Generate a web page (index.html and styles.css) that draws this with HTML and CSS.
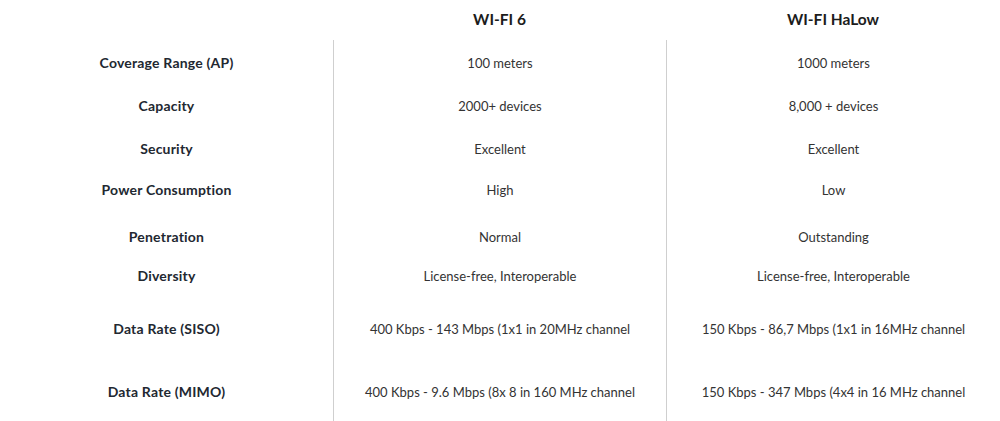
FILE: index.html
```html
<!DOCTYPE html>
<html lang="en">
<head>
<meta charset="utf-8">
<title>WI-FI 6 vs WI-FI HaLow</title>
<link rel="stylesheet" href="styles.css">
</head>
<body>
<div class="table">
  <div class="cell head"></div>
  <div class="cell head">WI-FI 6</div>
  <div class="cell head">WI-FI HaLow</div>

  <div class="cell label">Coverage Range (AP)</div>
  <div class="cell val div">100 meters</div>
  <div class="cell val div">1000 meters</div>

  <div class="cell label">Capacity</div>
  <div class="cell val div">2000+ devices</div>
  <div class="cell val div">8,000 + devices</div>

  <div class="cell label">Security</div>
  <div class="cell val div">Excellent</div>
  <div class="cell val div">Excellent</div>

  <div class="cell label">Power Consumption</div>
  <div class="cell val div">High</div>
  <div class="cell val div">Low</div>

  <div class="cell label">Penetration</div>
  <div class="cell val div">Normal</div>
  <div class="cell val div">Outstanding</div>

  <div class="cell label">Diversity</div>
  <div class="cell val div">License-free, Interoperable</div>
  <div class="cell val div">License-free, Interoperable</div>

  <div class="cell label">Data Rate (SISO)</div>
  <div class="cell val div">400 Kbps - 143 Mbps (1x1 in 20MHz channel</div>
  <div class="cell val div">150 Kbps - 86,7 Mbps (1x1 in 16MHz channel</div>

  <div class="cell label last">Data Rate (MIMO)</div>
  <div class="cell val div last">400 Kbps - 9.6 Mbps (8x 8 in 160 MHz channel</div>
  <div class="cell val div last">150 Kbps - 347 Mbps (4x4 in 16 MHz channel</div>
</div>
</body>
</html>
```

FILE: styles.css
```css
html, body {
  margin: 0;
  padding: 0;
  background: #ffffff;
}

body {
  font-family: Lato, "Open Sans", "Liberation Sans", sans-serif;
  font-size: 13px;
  color: #333333;
}

.table {
  display: grid;
  grid-template-columns: 333px 333px 334px;
  grid-template-rows: 40px 46px 40px 46px 36px 58px 20px 86px 49px;
  width: 1000px;
  height: 421px;
}

.cell {
  display: flex;
  align-items: center;
  justify-content: center;
  text-align: center;
  line-height: 16px;
  white-space: nowrap;
}

.head {
  font-size: 15.5px;
  font-weight: 700;
  color: #1c1c1c;
  padding-bottom: 2px;
}

.label {
  font-size: 14px;
  letter-spacing: 0.2px;
  font-weight: 700;
  color: #222831;
}

.div {
  border-left: 1px solid #cfcfcf;
}

.last {
  padding-bottom: 9px;
}
```
